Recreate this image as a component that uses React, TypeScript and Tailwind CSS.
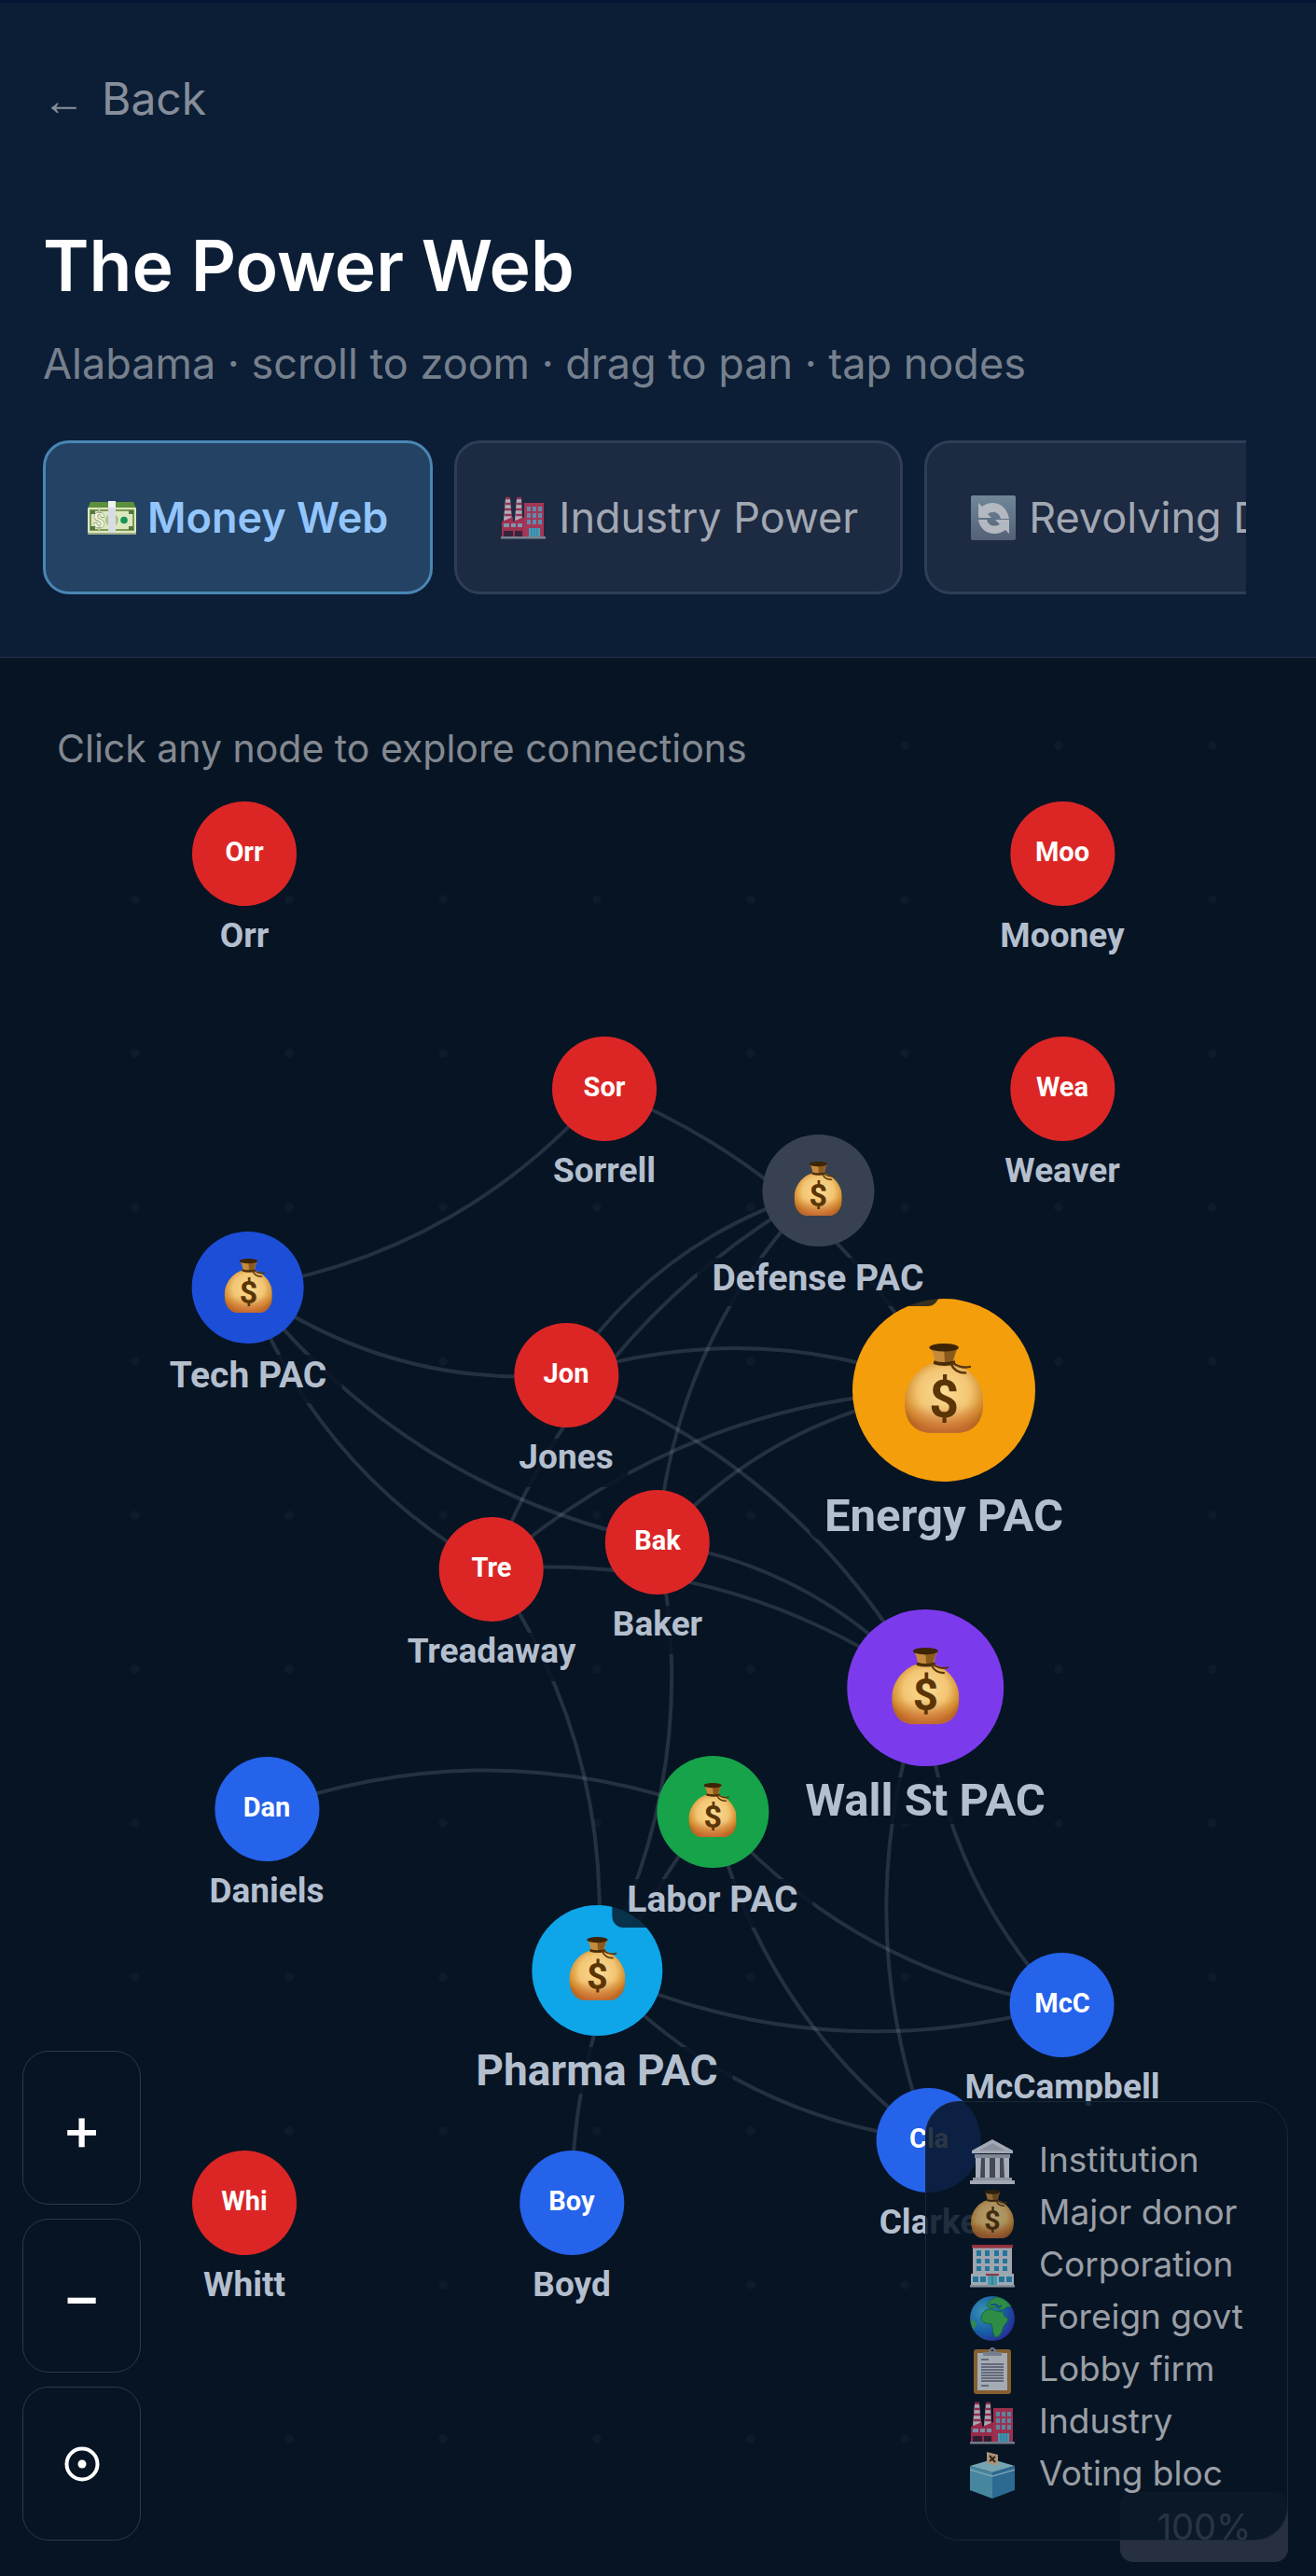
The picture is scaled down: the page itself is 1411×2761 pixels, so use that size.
// frontend/src/components/PowerWeb.tsx
import { useState } from "react";
import type { ReactNode } from "react";

// ===== Types =====
type Size = "sm" | "md" | "lg" | "xl";

type WebNode = {
  id: string;
  label: string;
  x: number;
  y: number;
  r: number;
  size: Size;
  fill: string;
  donor?: boolean;
};

// ===== Icons =====
function MoneyBag({ className }: { className?: string }) {
  return (
    <svg viewBox="0 0 88 100" className={className} aria-hidden="true">
      <defs>
        <radialGradient id="bag" cx="0.5" cy="0.42" r="0.6">
          <stop offset="0" stopColor="#fbdc94" />
          <stop offset="0.55" stopColor="#f2c573" />
          <stop offset="0.85" stopColor="#d48d2c" />
          <stop offset="1" stopColor="#a9650f" />
        </radialGradient>
        <linearGradient id="bagBase" x1="0" y1="0" x2="0" y2="1">
          <stop offset="0.6" stopColor="#c9683a" stopOpacity="0" />
          <stop offset="1" stopColor="#c9683a" stopOpacity="0.75" />
        </linearGradient>
      </defs>
      <path d="M34 21C16 26 0 44 0 66c0 22 11 34 30 34h28c19 0 30-12 30-34 0-22-16-40-34-45z" fill="url(#bag)" />
      <path d="M34 21C16 26 0 44 0 66c0 22 11 34 30 34h28c19 0 30-12 30-34 0-22-16-40-34-45z" fill="url(#bagBase)" />
      <path d="M29 5c3 6 5 11 4 17h23c-1-6 1-11 4-17z" fill="#c58a3c" />
      <path d="M44 7l1 15h8l5-15z" fill="#8a5a1c" />
      <ellipse cx="44" cy="4.500" rx="16.500" ry="4.500" fill="#3d2405" />
      <path d="M33 19q11 4 23 0l1 4q-12 4-25 0z" fill="#4a2c08" />
      <path d="M52 23c3 7 9 10 16 10M54 22c6 4 12 6 19 4" fill="none" stroke="#5a380d" strokeWidth="2.600" strokeLinecap="round" />
      <text x="44" y="82" textAnchor="middle" className="font-['Roboto',sans-serif] text-[58px] font-bold" fill="#5b3505">$</text>
    </svg>
  );
}

function Banknotes({ className }: { className?: string }) {
  return (
    <svg viewBox="0 0 52 36" className={className} aria-hidden="true">
      <path d="M3 1h46l3 7H0z" fill="#5d8f3c" />
      <rect y="7" width="52" height="27" rx="1" fill="#dbe8bd" />
      <rect x="3" y="10" width="46" height="21" fill="none" stroke="#7d9a58" strokeWidth="2" />
      <path d="M3 10h5v4H3zM44 10h5v4h-5zM3 27h5v4H3zM44 27h5v4h-5z" fill="#54763a" />
      <circle cx="26" cy="20.500" r="7" fill="#a9c28a" />
      <circle cx="39" cy="20.500" r="3.800" fill="#16945a" />
      <rect x="22" width="8" height="35" fill="#d9dce4" />
      <rect x="22" width="8" height="7" fill="#f0f1f5" />
      <text x="12" y="28.500" textAnchor="middle" className="font-['Roboto',sans-serif] text-[23px] font-bold" fill="#f6f8e8" stroke="#8b9a6c" strokeWidth="0.600">$</text>
      <rect y="34" width="52" height="2" fill="#9fae8a" />
    </svg>
  );
}

function Factory({ className }: { className?: string }) {
  return (
    <svg viewBox="0 0 48 46" className={className} aria-hidden="true">
      <path d="M5 2h5l2 24H3zM17 2h5l1 24h-8z" fill="#f2e3ea" />
      <path d="M5 2h5M5 8h6M4 14h7M4 20h8M17 2h5M17 8h5M16 14h7M16 20h7" stroke="#c8375f" strokeWidth="2.600" />
      <path d="M1 27l12-5v5l12-5v22H1z" fill="#d8345a" />
      <rect x="25" y="7" width="21" height="37" fill="#dd3d60" />
      <path d="M28 11h4v5h-4zM34 11h4v5h-4zM40 11h4v5h-4zM28 18h4v5h-4zM34 18h4v5h-4zM40 18h4v5h-4zM28 25h4v5h-4zM34 25h4v5h-4zM40 25h4v5h-4z" fill="#7fb4d8" />
      <path d="M3 29h6v4H3zM11 29h5v4h-5zM18 29h5v4h-5z" fill="#a9c4de" />
      <path d="M3 37h10v6H3zM15 37h8v6h-8z" fill="#41223a" />
      <path d="M30 34h12v10H30z" fill="#5fd0ec" />
      <path d="M33 34v10M36 34v10M39 34v10" stroke="#2b8fae" strokeWidth="0.800" />
      <rect y="43" width="48" height="2.500" fill="#a3a8b5" />
    </svg>
  );
}

function Refresh({ className }: { className?: string }) {
  return (
    <svg viewBox="0 0 48 48" className={className} aria-hidden="true">
      <defs>
        <linearGradient id="tile" x1="0" y1="0" x2="0" y2="1">
          <stop offset="0" stopColor="#94b0bd" />
          <stop offset="1" stopColor="#6c788e" />
        </linearGradient>
      </defs>
      <rect width="48" height="48" rx="2" fill="url(#tile)" />
      <path d="M8 8l4 4c10-8 26-4 29 13h-9c-2-8-9-9-14-5l4 4H8z" fill="#f4f5f8" />
      <path d="M41 41l-4-4C27 45 10 41 8 26h9c2 7 8 8 14 5l-5-5h15z" fill="#f4f5f8" />
    </svg>
  );
}

function Institution({ className }: { className?: string }) {
  return (
    <svg viewBox="0 0 48 48" className={className} aria-hidden="true">
      <path d="M24 0l22 12v3H2v-3z" fill="#e6e8f0" />
      <path d="M24 4l14 8H10z" fill="#c3c7d4" />
      <path d="M5 16h38v4H5z" fill="#b4b8c6" />
      <path d="M6 20h36v22H6z" fill="#5d6070" />
      <path d="M6 20h6l-1 22H6zM16 20h5v22h-5zM27 20h5v22h-5zM36 20h6v22h-5z" fill="#eceef5" />
      <path d="M3 41h42v3H3z" fill="#c9ccd8" />
      <path d="M0 44h48v4H0z" fill="#e3e5ee" />
    </svg>
  );
}

function Office({ className }: { className?: string }) {
  return (
    <svg viewBox="0 0 48 46" className={className} aria-hidden="true">
      <rect x="3" y="3" width="42" height="30" fill="#dde3ea" />
      <rect x="2" width="44" height="3.500" fill="#d0404a" />
      <rect x="1" y="31" width="46" height="13" fill="#dfe8ee" />
      <path d="M7 6h5v6H7zM16 6h5v6h-5zM26 6h5v6h-5zM35 6h5v6h-5zM7 15h5v5H7zM16 15h5v5h-5zM26 15h5v5h-5zM35 15h5v5h-5zM7 23h5v5H7zM16 23h5v5h-5zM26 23h5v5h-5zM35 23h5v5h-5z" fill="#2f9fd0" />
      <path d="M3 34h6v6H3zM11 34h6v6h-6zM31 34h6v6h-6zM39 34h6v6h-6z" fill="#2f9fd0" />
      <rect x="19" y="31" width="10" height="13" fill="#62d3e6" />
      <rect x="17" y="31" width="14" height="2" fill="#c9434b" />
      <path d="M24 33v11" stroke="#2b8fae" />
      <rect y="43" width="48" height="2.500" fill="#b9c6cf" />
    </svg>
  );
}

function Globe({ className }: { className?: string }) {
  return (
    <svg viewBox="0 0 48 48" className={className} aria-hidden="true">
      <defs>
        <radialGradient id="sea" cx="0.3" cy="0.35" r="0.75">
          <stop offset="0" stopColor="#4fc8f0" />
          <stop offset="0.6" stopColor="#1f7fdc" />
          <stop offset="1" stopColor="#3636c8" />
        </radialGradient>
      </defs>
      <circle cx="24" cy="24" r="24" fill="url(#sea)" />
      <path d="M17 15c4-2 8 0 11 1l7 1c1 4 4 7 6 7-1 5-5 7-6 11-1 5-4 9-8 9-3-4-2-9-4-14-4-1-10 0-11-6 0-4 2-7 5-9z" fill="#3fbf57" stroke="#1b8a4d" />
      <path d="M18 10c2-5 6-7 10-9 7 1 12 4 16 10l-5 1-4 3c-3 0-4-3-7-3s-6 3-10-2z" fill="#3fbf57" stroke="#1b8a4d" />
      <path d="M1 25c4 1 6 3 6 5-1 3-2 4-3 6-2-3-3-7-3-11z" fill="#3fbf57" />
      <path d="M22 9c3 1 5-1 7 1s4 1 5 0" fill="none" stroke="#1b6ba8" strokeWidth="2" />
    </svg>
  );
}

function Clipboard({ className }: { className?: string }) {
  return (
    <svg viewBox="0 0 48 52" className={className} aria-hidden="true">
      <rect x="4" y="3" width="40" height="48" rx="3" fill="#b97f35" />
      <rect x="8" y="7" width="32" height="40" fill="#e9ebf2" />
      <path d="M14 10V6h6c0-3 2-5 4-5s4 2 4 5h6v4z" fill="#a6abb9" />
      <circle cx="24" cy="4" r="1.500" fill="#4a4f60" />
      <path d="M12 14h8M12 19h24M12 22h24M12 25h24M12 28h24M12 31h24M12 34h24M12 37h24M12 42h8" stroke="#6a7187" strokeWidth="1.400" />
    </svg>
  );
}

function BallotBox({ className }: { className?: string }) {
  return (
    <svg viewBox="0 0 48 50" className={className} aria-hidden="true">
      <path d="M0 15l24-7 24 7-24 7z" fill="#a4e2ee" />
      <path d="M0 15l24 7v28L0 41z" fill="#62b8d4" />
      <path d="M48 15l-24 7v28l24-9z" fill="#3d8fc0" />
      <path d="M0 19l24 7 24-7" fill="none" stroke="#b8eaf3" strokeWidth="1.200" />
      <path d="M18 0l12 3v12l-12-3z" fill="#f0c99c" />
      <path d="M21 4l6 7M27 5l-6 5" stroke="#4a2c12" strokeWidth="2" />
    </svg>
  );
}

// ===== Data =====
const RED = "#dc2626";
const BLUE = "#2563eb";

const NODES: WebNode[] = [
  { id: "orr", label: "Orr", x: 262, y: 210, r: 56, size: "sm", fill: RED },
  { id: "mooney", label: "Mooney", x: 1139, y: 210, r: 56, size: "sm", fill: RED },
  { id: "sorrell", label: "Sorrell", x: 648, y: 462, r: 56, size: "sm", fill: RED },
  { id: "weaver", label: "Weaver", x: 1139, y: 462, r: 56, size: "sm", fill: RED },
  { id: "jones", label: "Jones", x: 607, y: 769, r: 56, size: "sm", fill: RED },
  { id: "treadaway", label: "Treadaway", x: 527, y: 977, r: 56, size: "sm", fill: RED },
  { id: "baker", label: "Baker", x: 705, y: 948, r: 56, size: "sm", fill: RED },
  { id: "daniels", label: "Daniels", x: 286, y: 1234, r: 56, size: "sm", fill: BLUE },
  { id: "mccampbell", label: "McCampbell", x: 1139, y: 1444, r: 56, size: "sm", fill: BLUE },
  { id: "clarke", label: "Clarke", x: 996, y: 1589, r: 56, size: "sm", fill: BLUE },
  { id: "boyd", label: "Boyd", x: 613, y: 1656, r: 56, size: "sm", fill: BLUE },
  { id: "whitt", label: "Whitt", x: 262, y: 1656, r: 56, size: "sm", fill: RED },
  { id: "energy", label: "Energy PAC", x: 1012, y: 785, r: 98, size: "xl", fill: "#f59e0b", donor: true },
  { id: "wall", label: "Wall St PAC", x: 992, y: 1104, r: 84, size: "xl", fill: "#7c3aed", donor: true },
  { id: "pharma", label: "Pharma PAC", x: 640, y: 1407, r: 70, size: "lg", fill: "#0ea5e9", donor: true },
  { id: "tech", label: "Tech PAC", x: 266, y: 675, r: 60, size: "md", fill: "#1d4ed8", donor: true },
  { id: "labor", label: "Labor PAC", x: 764, y: 1237, r: 60, size: "md", fill: "#16a34a", donor: true },
  { id: "defense", label: "Defense PAC", x: 877, y: 571, r: 60, size: "md", fill: "#374151", donor: true },
];

const LINKS: [string, string[]][] = [
  ["energy", ["sorrell", "jones", "treadaway", "baker"]],
  ["defense", ["jones", "treadaway", "baker"]],
  ["tech", ["sorrell", "jones", "treadaway", "baker"]],
  ["wall", ["jones", "treadaway", "baker", "mccampbell", "clarke"]],
  ["pharma", ["treadaway", "baker", "mccampbell", "clarke"]],
  ["labor", ["daniels", "mccampbell", "clarke", "boyd"]],
];

const LABEL: Record<Size, string> = {
  sm: "mt-3 pb-3 text-[37px] leading-[40px]",
  md: "mt-3 pb-2 text-[39px] leading-[44px]",
  lg: "mt-3 text-[46px] leading-[50px]",
  xl: "mt-3 text-[49px] leading-[50px]",
};

const TABS: { id: string; label: string; icon: ReactNode }[] = [
  { id: "money", label: "Money Web", icon: <Banknotes className="w-[52px]" /> },
  { id: "industry", label: "Industry Power", icon: <Factory className="w-12 opacity-70" /> },
  { id: "revolving", label: "Revolving Door", icon: <Refresh className="w-12 opacity-70" /> },
];

const LEGEND: { label: string; icon: ReactNode }[] = [
  { label: "Institution", icon: <Institution className="w-12" /> },
  { label: "Major donor", icon: <MoneyBag className="w-[46px]" /> },
  { label: "Corporation", icon: <Office className="w-12" /> },
  { label: "Foreign govt", icon: <Globe className="w-12" /> },
  { label: "Lobby firm", icon: <Clipboard className="w-12" /> },
  { label: "Industry", icon: <Factory className="w-12" /> },
  { label: "Voting bloc", icon: <BallotBox className="w-12" /> },
];

// quadratic curve, bowed by 18% of the distance between both nodes
function curve(a: WebNode, b: WebNode) {
  const dx = b.x - a.x;
  const dy = b.y - a.y;
  const cx = (a.x + b.x) / 2 - dy * 0.18;
  const cy = (a.y + b.y) / 2 + dx * 0.18;
  return `M${a.x} ${a.y}Q${cx} ${cy} ${b.x} ${b.y}`;
}

function find(id: string) {
  return NODES.find((n) => n.id === id)!;
}

function Edges() {
  return (
    <svg className="absolute inset-0 h-full w-full" aria-hidden="true">
      <defs>
        <pattern id="dots" x="63" y="12" width="165" height="165" patternUnits="userSpaceOnUse">
          <circle cx="82" cy="82" r="4.500" fill="#ffffff" fillOpacity="0.03" />
        </pattern>
      </defs>
      <rect width="100%" height="100%" fill="url(#dots)" />
      {LINKS.map(([from, targets]) =>
        targets.map((to) => (
          <path key={from + to} d={curve(find(from), find(to))} fill="none" stroke="#94a3b8" strokeOpacity="0.2" strokeWidth="4" />
        ))
      )}
    </svg>
  );
}

function NodeButton({ node }: { node: WebNode }) {
  return (
    <button
      type="button"
      className="absolute flex -translate-x-1/2 flex-col items-center font-['Roboto',sans-serif] font-bold"
      style={{ left: node.x, top: node.y - node.r }}
    >
      <span
        className="flex items-center justify-center rounded-full text-[29px] leading-none text-white"
        style={{ width: node.r * 2, height: node.r * 2, background: node.fill }}
      >
        {node.donor ? <MoneyBag className="mb-1 w-[43%]" /> : <span className="mb-1">{node.label.slice(0, 3)}</span>}
      </span>
      <span className={`rounded-xl bg-[#071424]/80 px-4 whitespace-nowrap text-[#b4bfce] ${LABEL[node.size]}`}>
        {node.label}
      </span>
    </button>
  );
}

export default function App() {
  const [tab, setTab] = useState("money");

  return (
    <div className="flex min-h-screen flex-col bg-[#071424] font-['Inter',sans-serif]">
      <header className="border-t-[3px] border-b border-t-[#061438] border-b-[#22324a] bg-[#0c1e36] pt-[67px] pr-[75px] pb-[67px] pl-[46px]">
        <nav className="flex">
          <a href="#" className="flex items-baseline gap-[18px] text-[48px] leading-[72px] text-white/50">
            <span className="font-['Liberation_Sans',sans-serif] text-[45px]">←</span>
            Back
          </a>
        </nav>
        <h1 className="mt-[95px] text-[75px] leading-[92px] font-semibold text-white">The Power Web</h1>
        <p className="mt-[26px] text-[45px] leading-[66px] text-white/45">
          Alabama · scroll to zoom · drag to pan · tap nodes
        </p>
        <div className="mt-[49px] flex gap-[23px] overflow-x-auto [scrollbar-width:none]">
          {TABS.map((t) => (
            <button
              key={t.id}
              type="button"
              onClick={() => setTab(t.id)}
              className={`flex h-[165px] shrink-0 items-center gap-3 rounded-[28px] border-[3px] px-[45px] text-[45px] whitespace-nowrap ${
                tab === t.id
                  ? "border-[#4a86b4] bg-[#244263] font-semibold text-[#93c5fd]"
                  : "border-[#2f3d56] bg-[#1c2a42] text-white/60"
              }`}
            >
              <span className="flex w-[52px] justify-center">{t.icon}</span>
              {t.label}
            </button>
          ))}
        </div>
      </header>

      <main className="relative flex-1 overflow-hidden">
        <Edges />
        <p className="absolute top-[67px] left-[45px] bg-[#071424] px-4 text-[41px] leading-[60px] text-white/50">
          Click any node to explore connections
        </p>
        {NODES.map((n) => (
          <NodeButton key={n.id} node={n} />
        ))}

        {/* ===== Zoom controls ===== */}
        <div className="absolute bottom-[38px] left-6 flex flex-col gap-[15px] text-[64px] font-medium text-white">
          <button type="button" aria-label="Zoom in" className="flex h-[165px] w-[127px] items-center justify-center rounded-[28px] border border-[#2d3a4b] bg-[#071424]">
            +
          </button>
          <button type="button" aria-label="Zoom out" className="flex h-[165px] w-[127px] items-center justify-center rounded-[28px] border border-[#2d3a4b] bg-[#071424]">
            −
          </button>
          <button type="button" aria-label="Reset view" className="flex h-[165px] w-[127px] items-center justify-center rounded-[28px] border border-[#2d3a4b] bg-[#071424]">
            <svg viewBox="0 0 38 38" className="w-[38px]" aria-hidden="true">
              <circle cx="19" cy="19" r="16.500" fill="none" stroke="currentColor" strokeWidth="4" />
              <circle cx="19" cy="19" r="4.500" fill="currentColor" />
            </svg>
          </button>
        </div>

        <div className="absolute right-[30px] bottom-[15px] flex h-[75px] w-[180px] items-center justify-center rounded-[14px] bg-[#27303f] text-[38px] text-white/90">
          100%
        </div>

        {/* ===== Legend ===== */}
        <ul className="absolute right-[30px] bottom-[38px] w-[389px] rounded-[36px] border border-[#1a2737] bg-[#071424]/85 px-[47px] pt-[34px] pb-[43px] text-[37px] leading-[56px]">
          {LEGEND.map((l) => (
            <li key={l.label} className="flex h-14 items-center gap-[26px]">
              <span className="flex w-12 shrink-0 justify-center pt-1 opacity-70">{l.icon}</span>
              <span className="whitespace-nowrap text-white/60">{l.label}</span>
            </li>
          ))}
        </ul>
      </main>
    </div>
  );
}
